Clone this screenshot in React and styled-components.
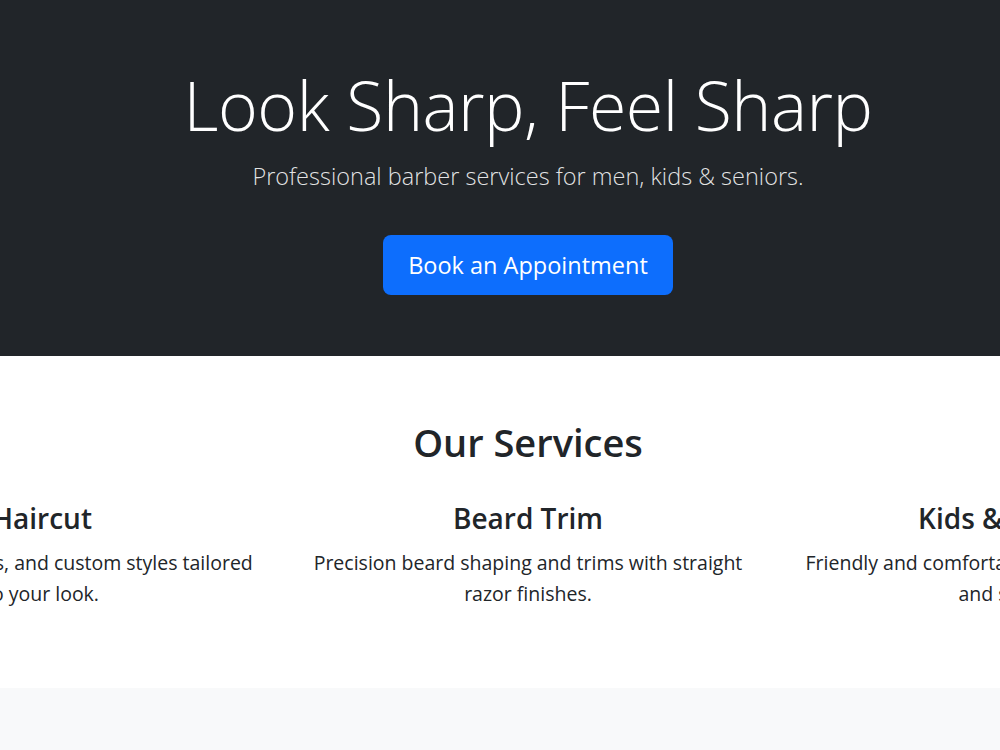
import React from "react";
import styled, { createGlobalStyle } from "styled-components";

const GlobalStyle = createGlobalStyle`
  html, body {
    margin: 0;
    padding: 0;
    overflow: hidden;
    background: #ffffff;
  }
  body {
    font-family: "Open Sans", "Noto Sans", sans-serif;
    color: #212529;
  }
`;

const Page = styled.div`
  width: 1056px;
`;

const Hero = styled.header`
  background-color: #212529;
  color: #ffffff;
  text-align: center;
  height: 356px;
  box-sizing: border-box;
  padding-top: 64px;
`;

const Title = styled.h1`
  margin: 0;
  font-size: 68px;
  font-weight: 300;
  line-height: 1.2;
  letter-spacing: -0.5px;
`;

const Lead = styled.p`
  margin: 13px 0 0;
  font-size: 23.5px;
  font-weight: 300;
  line-height: 1.5;
  color: rgba(255, 255, 255, 0.88);
`;

const BookButton = styled.a`
  display: inline-block;
  margin-top: 41px;
  padding: 12px 25px;
  font-size: 23.5px;
  line-height: 36px;
  color: #ffffff;
  background-color: #0d6efd;
  border-radius: 8px;
  text-decoration: none;
`;

const Services = styled.section`
  height: 332px;
  box-sizing: border-box;
  padding-top: 64px;
  text-align: center;
`;

const SectionTitle = styled.h2`
  margin: 0 0 36px;
  font-size: 38px;
  font-weight: 600;
  line-height: 1.2;
`;

const Row = styled.div`
  display: flex;
  justify-content: center;
`;

const Col = styled.div`
  flex: 0 0 486px;
  box-sizing: border-box;
  padding: 0 26px;
`;

const ServiceName = styled.h3`
  margin: 0 0 12px;
  font-size: 28px;
  font-weight: 600;
  line-height: 1.2;
`;

const ServiceText = styled.p`
  margin: 0;
  font-size: 19.5px;
  line-height: 31px;
`;

const Gallery = styled.section`
  background-color: #f8f9fa;
  height: 400px;
`;

const services = [
  {
    name: "Haircut",
    text: "Classic trims, fades, and custom styles tailored to your look.",
  },
  {
    name: "Beard Trim",
    text: "Precision beard shaping and trims with straight razor finishes.",
  },
  {
    name: "Kids & Seniors",
    text: "Friendly and comfortable haircuts for children and seniors.",
  },
];

export default function App() {
  return (
    <Page>
      <GlobalStyle />
      <Hero>
        <Title>Look Sharp, Feel Sharp</Title>
        <Lead>Professional barber services for men, kids &amp; seniors.</Lead>
        <BookButton href="#book">Book an Appointment</BookButton>
      </Hero>
      <Services>
        <SectionTitle>Our Services</SectionTitle>
        <Row>
          {services.map((s) => (
            <Col key={s.name}>
              <ServiceName>{s.name}</ServiceName>
              <ServiceText>{s.text}</ServiceText>
            </Col>
          ))}
        </Row>
      </Services>
      <Gallery />
    </Page>
  );
}
